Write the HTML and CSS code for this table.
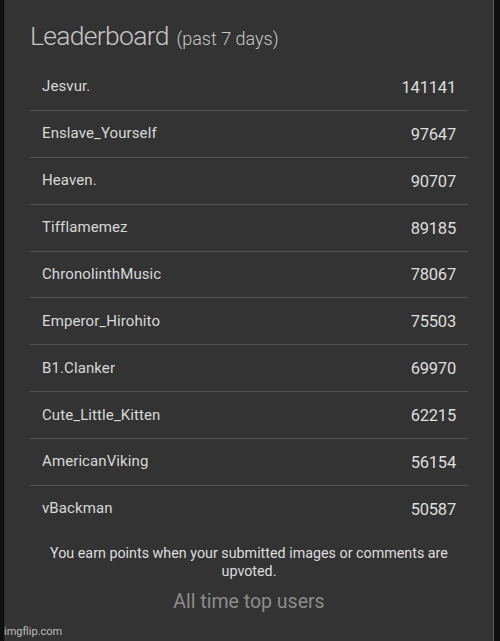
FILE: index.html
```html
<!DOCTYPE html>
<html>
<head>
<meta charset="utf-8">
<link rel="stylesheet" href="styles.css">
</head>
<body>
<div class="panel">
  <h1 class="title">Leaderboard <span class="sub">(past 7 days)</span></h1>
  <div class="list">
    <div class="row"><span class="name">Jesvur.</span><span class="pts">141141</span></div>
    <div class="row"><span class="name">Enslave_Yourself</span><span class="pts">97647</span></div>
    <div class="row"><span class="name">Heaven.</span><span class="pts">90707</span></div>
    <div class="row"><span class="name">Tifflamemez</span><span class="pts">89185</span></div>
    <div class="row"><span class="name">ChronolinthMusic</span><span class="pts">78067</span></div>
    <div class="row"><span class="name">Emperor_Hirohito</span><span class="pts">75503</span></div>
    <div class="row"><span class="name">B1.Clanker</span><span class="pts">69970</span></div>
    <div class="row"><span class="name">Cute_Little_Kitten</span><span class="pts">62215</span></div>
    <div class="row"><span class="name">AmericanViking</span><span class="pts">56154</span></div>
    <div class="row"><span class="name">vBackman</span><span class="pts">50587</span></div>
  </div>
  <p class="note">You earn points when your submitted images or comments are upvoted.</p>
  <div class="alltime">All time top users</div>
  <div class="watermark">imgflip.com</div>
</div>
</body>
</html>
```
FILE: styles.css
```css
html, body {
  margin: 0;
  padding: 0;
  background: #0f0f0f;
  height: 100%;
}
body {
  font-family: Roboto, "Liberation Sans", sans-serif;
}
.panel {
  position: relative;
  margin-left: 4px;
  width: 490px;
  height: 641px;
  background: #333333;
  border-left: 1px solid #2a2a2a;
  border-right: 1px solid #5c5c5c;
  box-sizing: border-box;
  padding: 0 25px 0 25px;
}
.title {
  margin: 0;
  padding-top: 18px;
  height: 46px;
  font-weight: 300;
  font-size: 26.5px;
  line-height: 36px;
  color: #c6c6c6;
  letter-spacing: -0.7px;
}
.sub {
  font-size: 18px;
  letter-spacing: 0;
  margin-left: 2px;
}
.list {
  margin-top: 0;
}
.row {
  display: flex;
  justify-content: space-between;
  align-items: center;
  height: 45.875px;
  border-bottom: 1px solid #545454;
  padding: 0 12px 0 12px;
}
.row:last-child {
  border-bottom: none;
}
.name {
  font-size: 15px;
  color: #d8d8d8;
  margin-top: -1px;
  letter-spacing: 0.1px;
}
.pts {
  font-size: 16.5px;
  color: #dedede;
  margin-top: 1px;
  letter-spacing: -0.2px;
}
.note {
  margin: 12px 0 0 0;
  text-align: center;
  font-size: 14.3px;
  line-height: 18.5px;
  color: #dedede;
}
.alltime {
  margin-top: 9px;
  text-align: center;
  font-size: 19.5px;
  line-height: 24px;
  color: #8c8c8c;
}
.watermark {
  position: absolute;
  left: -1px;
  bottom: 2px;
  font-size: 11px;
  line-height: 14px;
  color: #bdbdbd;
}
```
